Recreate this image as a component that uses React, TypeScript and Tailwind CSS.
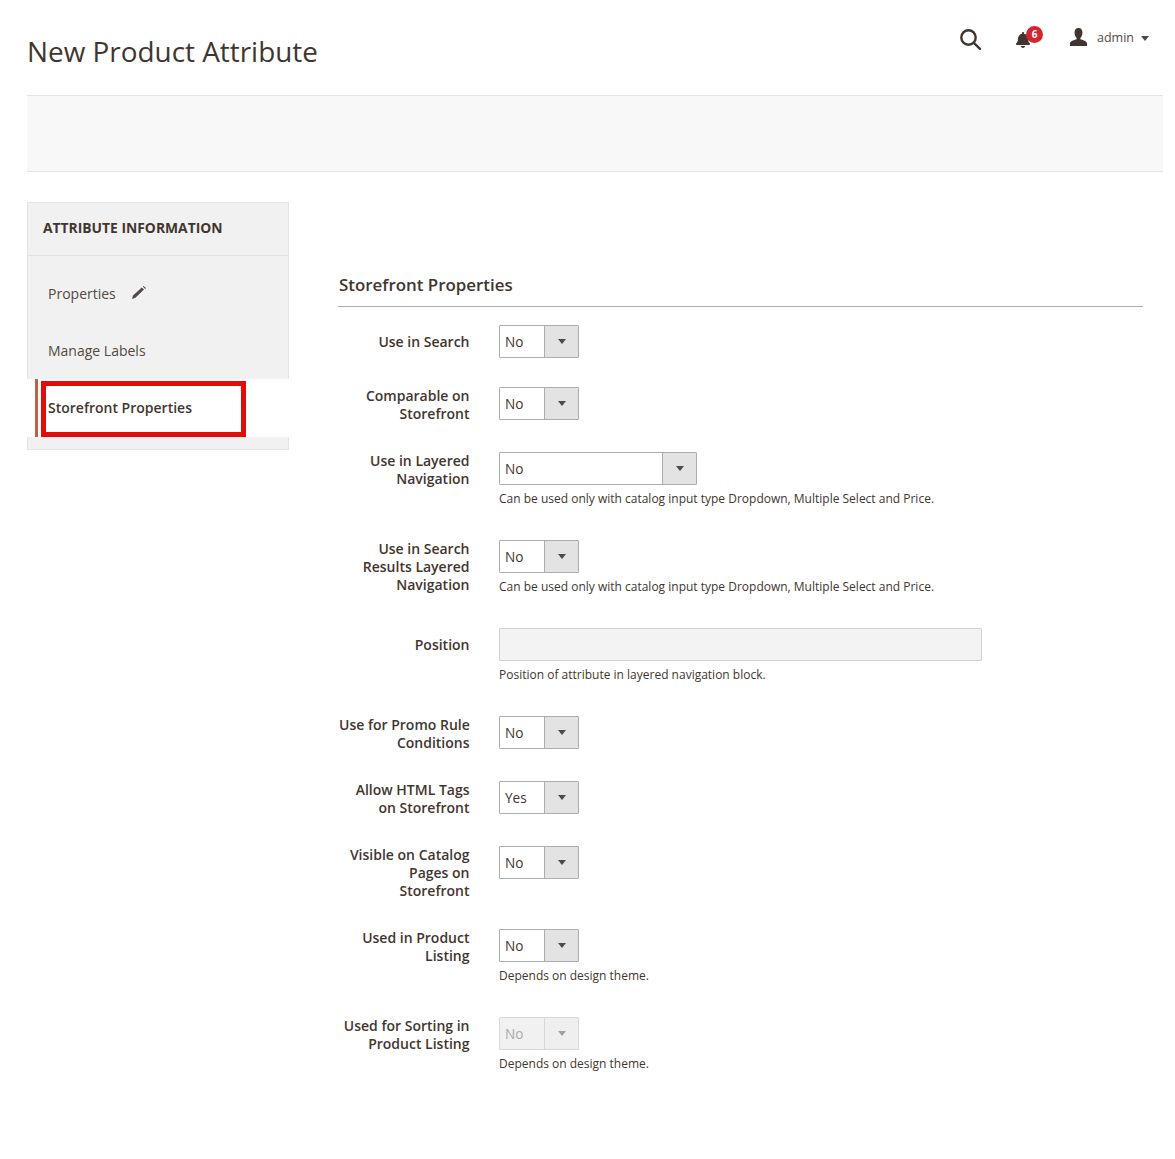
import { FaBell } from "react-icons/fa";

const font = { fontFamily: '"Open Sans", sans-serif' };

const Caret = ({ color = "#514943" }: { color?: string }) => (
  <svg width="8" height="5" viewBox="0 0 8 5">
    <path d="M0 0h8L4 5z" fill={color} />
  </svg>
);

const SelectBox = ({
  value,
  wide,
  disabled,
}: {
  value: string;
  wide?: boolean;
  disabled?: boolean;
}) => (
  <div
    className={`flex h-[33px] ${wide ? "w-[198px]" : "w-[80px]"} rounded-[1px] border ${
      disabled ? "border-[#d8d8d8] bg-[#f1f1f1] text-[#a9a9a9]" : "border-[#adadad] bg-white text-[#41362f]"
    }`}
  >
    <div className="flex-1 pl-[5px] text-[13.6px] leading-[31px]">{value}</div>
    <div
      className={`flex w-[34px] items-center justify-center border-l ${
        disabled ? "border-[#d8d8d8] bg-[#efefef]" : "border-[#adadad] bg-[#e3e3e3]"
      }`}
    >
      <Caret color={disabled ? "#a0a0a0" : "#514943"} />
    </div>
  </div>
);

const Note = ({ children }: { children: string }) => (
  <p className="pt-[5px] pb-[3px] text-[12px] leading-[18px] text-[#41362f]">{children}</p>
);

const Row = ({
  label,
  children,
}: {
  label: string[];
  children: React.ReactNode;
}) => (
  <div className="mb-[29px] flex items-start">
    <div className="flex min-h-[33px] w-[130.5px] shrink-0 flex-col justify-center text-right text-[14px] leading-[18px] font-semibold text-[#41362f]">
      {label.map((line) => (
        <span key={line} className="whitespace-nowrap">
          {line}
        </span>
      ))}
    </div>
    <div className="ml-[29.5px]">{children}</div>
  </div>
);

const dropdownNote =
  "Can be used only with catalog input type Dropdown, Multiple Select and Price.";

const App = () => {
  return (
    <div className="h-[1159px] w-[1175px] overflow-hidden bg-white pl-[27px]" style={font}>
      <header className="flex h-[95px] w-[1136px] items-start justify-between">
        <h1 className="mt-[31px] text-[27.9px] leading-[40px] text-[#41362f]">
          New Product Attribute
        </h1>
        <div className="mt-[26px] flex items-start text-[#41362f]">
          <svg className="mt-[3px]" width="22" height="21" viewBox="0 0 22 21" fill="none" stroke="#41362f" strokeWidth="2.4">
            <circle cx="8.500" cy="8.500" r="7.200" />
            <path d="M13.800 13.800 20 19.800" strokeLinecap="round" />
          </svg>
          <div className="relative ml-[33px] mr-[26px] h-[24px] w-[28px]">
            <FaBell className="absolute left-0 top-[6px] text-[16px] text-[#41362f]" />
            <span className="absolute left-[11px] top-0 flex h-[17px] w-[17px] items-center justify-center rounded-full bg-[#d5232f] text-[10px] font-bold text-white">
              6
            </span>
          </div>
          <svg className="mt-[2px]" width="19" height="18" viewBox="0 0 20 20" fill="#41362f">
            <path d="M10 0c3 0 4.400 2.200 4.400 5.200 0 2.400-1 4.600-2.300 5.800v1.600c2.800.9 7 1.900 7.400 4.400v3H.5v-3c.4-2.500 4.600-3.500 7.400-4.400V11C6.600 9.800 5.600 7.600 5.600 5.200 5.600 2.200 7 0 10 0z" />
          </svg>
          <span className="ml-[9px] mt-[2px] text-[12.5px] leading-[20px] text-[#514943]">admin</span>
          <span className="ml-[7px] mr-[14px] mt-[10px] flex">
            <Caret />
          </span>
        </div>
      </header>

      <div className="h-[77px] w-[1136px] border-y border-[#e3e3e3] bg-[#f8f8f8]" />

      <div className="mt-[30px] flex items-start">
        <aside className="h-[248px] w-[262px] shrink-0 border border-[#e3e3e3] bg-[#f1f1f1]">
          <div className="flex h-[53px] items-center border-b border-[#e3e3e3] pb-px pl-[15px] text-[13.85px] font-bold text-[#41362f]">
            ATTRIBUTE INFORMATION
          </div>
          <nav className="pt-[9px] text-[14px] text-[#514943]">
            <div className="flex h-[57px] items-center pb-px pl-[20px]">
              Properties
              <svg className="ml-[16px] -mt-px" width="14" height="13" viewBox="0 0 14 13" fill="#514943">
                <path d="M0 13l1-3.400L9.800 1.500 12 3.400 3.400 11.800zM10.800.6l.6-.6L14 2.100l-.9 1z" />
              </svg>
            </div>
            <div className="flex h-[57px] items-center pb-px pl-[20px]">Manage Labels</div>
            <div className="relative -mx-px h-[58px] bg-white pl-[8px]">
              <div className="flex h-full items-center border-l-[3px] border-[#bb6446] pb-[2px] pl-[10px] font-semibold text-[#41362f]">
                Storefront Properties
              </div>
              <div className="absolute left-[14px] top-[2px] h-[56px] w-[205px] border-[5px] border-[#e60b0b]" />
            </div>
          </nav>
        </aside>

        <main className="ml-[50px] w-[804px]">
          <h2 className="mt-[70px] -ml-px border-b border-[#adadad] pb-[9px] pl-px text-[16.9px] leading-[25px] font-semibold text-[#41362f]">
            Storefront Properties
          </h2>
          <div className="mt-[18px]">
            <Row label={["Use in Search"]}>
              <SelectBox value="No" />
            </Row>
            <Row label={["Comparable on", "Storefront"]}>
              <SelectBox value="No" />
            </Row>
            <Row label={["Use in Layered", "Navigation"]}>
              <SelectBox value="No" wide />
              <Note>{dropdownNote}</Note>
            </Row>
            <Row label={["Use in Search", "Results Layered", "Navigation"]}>
              <SelectBox value="No" />
              <Note>{dropdownNote}</Note>
            </Row>
            <Row label={["Position"]}>
              <div className="h-[33px] w-[483px] rounded-[1px] border border-[#d0d0d0] bg-[#f3f3f3]" />
              <Note>Position of attribute in layered navigation block.</Note>
            </Row>
            <Row label={["Use for Promo Rule", "Conditions"]}>
              <SelectBox value="No" />
            </Row>
            <Row label={["Allow HTML Tags", "on Storefront"]}>
              <SelectBox value="Yes" />
            </Row>
            <Row label={["Visible on Catalog", "Pages on", "Storefront"]}>
              <SelectBox value="No" />
            </Row>
            <Row label={["Used in Product", "Listing"]}>
              <SelectBox value="No" />
              <Note>Depends on design theme.</Note>
            </Row>
            <Row label={["Used for Sorting in", "Product Listing"]}>
              <SelectBox value="No" disabled />
              <Note>Depends on design theme.</Note>
            </Row>
          </div>
        </main>
      </div>
    </div>
  );
};

export default App;
